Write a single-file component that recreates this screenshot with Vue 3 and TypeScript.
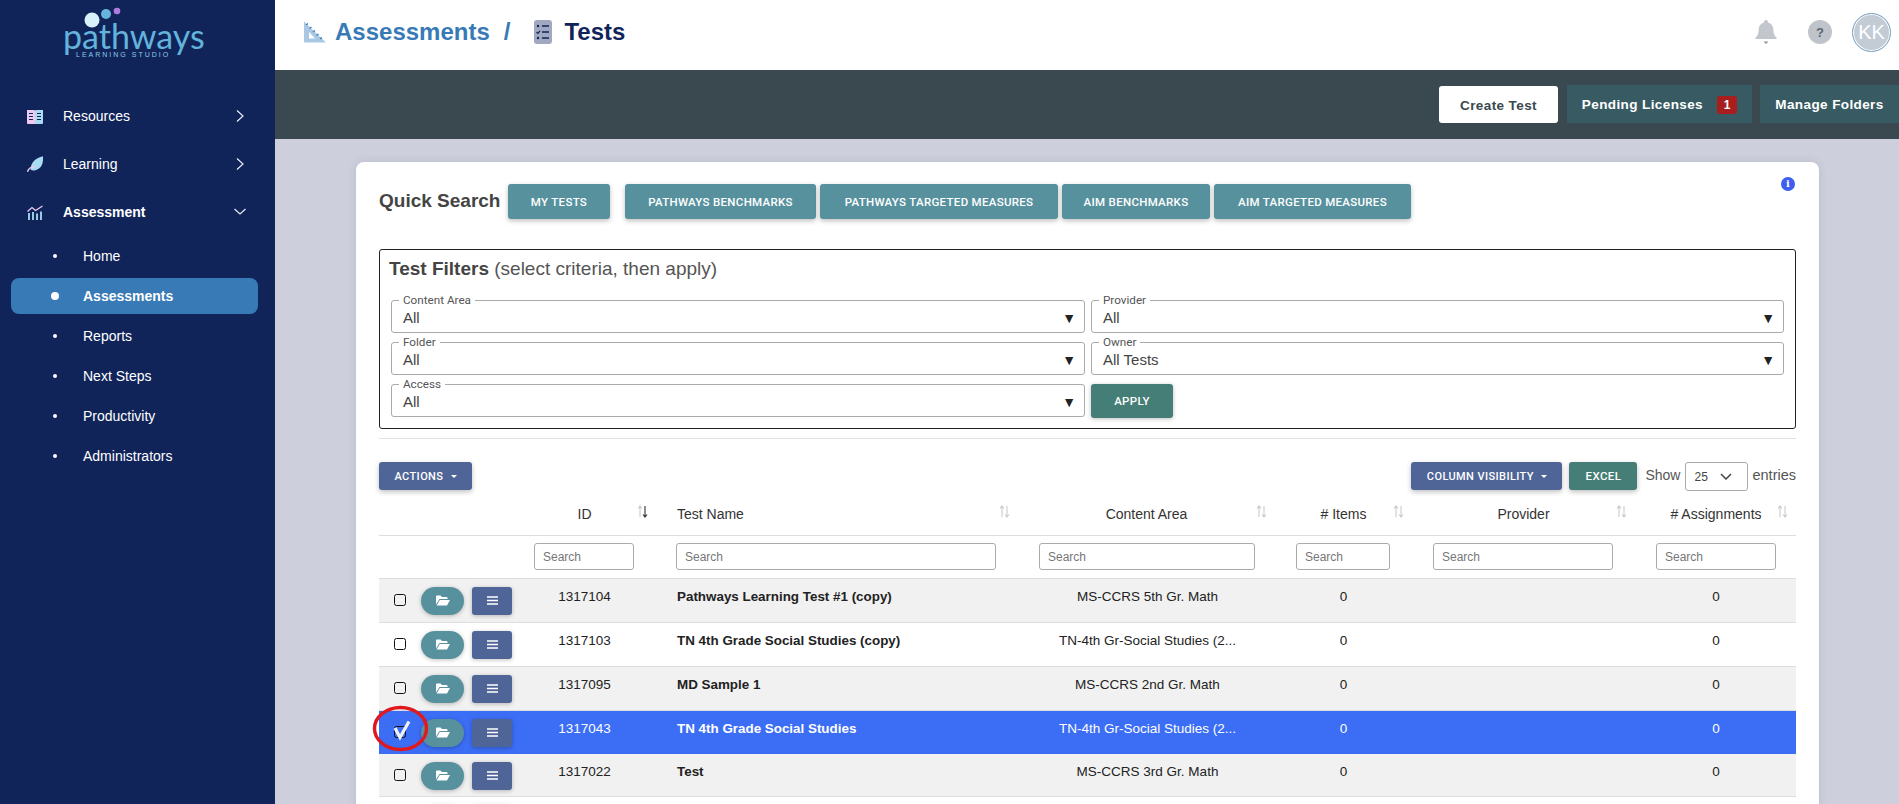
<script setup lang="ts">
interface Col { key: string; label: string; width: number; inputWidth: number; active?: boolean }
interface Row { id: string; name: string; area: string; items: string; assignments: string; selected?: boolean; short?: boolean }

const nav = ['Home', 'Assessments', 'Reports', 'Next Steps', 'Productivity', 'Administrators']
const quick = [
  { label: 'PATHWAYS BENCHMARKS', width: 191 },
  { label: 'PATHWAYS TARGETED MEASURES', width: 238 },
  { label: 'AIM BENCHMARKS', width: 148 },
  { label: 'AIM TARGETED MEASURES', width: 197 },
]
const leftFilters = [
  { label: 'Content Area', value: 'All' },
  { label: 'Folder', value: 'All' },
  { label: 'Access', value: 'All' },
]
const rightFilters = [
  { label: 'Provider', value: 'All' },
  { label: 'Owner', value: 'All Tests' },
]
const cols: Col[] = [
  { key: 'id', label: 'ID', width: 143, inputWidth: 100, active: true },
  { key: 'name', label: 'Test Name', width: 362, inputWidth: 320 },
  { key: 'area', label: 'Content Area', width: 257, inputWidth: 216 },
  { key: 'items', label: '# Items', width: 137, inputWidth: 94 },
  { key: 'provider', label: 'Provider', width: 223, inputWidth: 180 },
  { key: 'assign', label: '# Assignments', width: 152, inputWidth: 120 },
]
const rows: Row[] = [
  { id: '1317104', name: 'Pathways Learning Test #1 (copy)', area: 'MS-CCRS 5th Gr. Math', items: '0', assignments: '0' },
  { id: '1317103', name: 'TN 4th Grade Social Studies (copy)', area: 'TN-4th Gr-Social Studies (2...', items: '0', assignments: '0' },
  { id: '1317095', name: 'MD Sample 1', area: 'MS-CCRS 2nd Gr. Math', items: '0', assignments: '0' },
  { id: '1317043', name: 'TN 4th Grade Social Studies', area: 'TN-4th Gr-Social Studies (2...', items: '0', assignments: '0', selected: true, short: true },
  { id: '1317022', name: 'Test', area: 'MS-CCRS 3rd Gr. Math', items: '0', assignments: '0', short: true },
  { id: '', name: '', area: '', items: '', assignments: '' },
]
</script>

<template>
  <div class="app">
    <aside class="side">
      <div class="logo">
        <svg class="dots" width="60" height="30" viewBox="0 0 60 30">
          <circle cx="13" cy="21" r="7.5" fill="#d9f1f8" />
          <circle cx="27" cy="15" r="5" fill="#66b5dc" />
          <circle cx="38" cy="12" r="3.3" fill="#b07be0" />
        </svg>
        <div class="logo-word">pathways</div>
        <div class="logo-sub">LEARNING STUDIO</div>
      </div>

      <a class="item">
        <svg class="ico" width="16" height="15" viewBox="0 0 16 15">
          <path d="M0 1h7a1 1 0 0 1 1 1v13H1a1 1 0 0 1-1-1z" fill="#efc9ee" />
          <path d="M8 2a1 1 0 0 1 1-1h7v13a1 1 0 0 1-1 1H8z" fill="#a9dcf2" />
          <path d="M2 4.500h4M2 7.500h4M2 10.500h4M10 4.500h4M10 7.500h4M10 10.500h4" stroke="#10245a" stroke-width="1.100" />
        </svg>
        <span class="label">Resources</span>
        <svg class="chev" width="8" height="12" viewBox="0 0 8 12"><path d="M1 .500l6 5.500-6 5.500" fill="none" stroke="#e6ebf4" stroke-width="1.200" /></svg>
      </a>
      <a class="item">
        <svg class="ico" width="16" height="16" viewBox="0 0 16 16">
          <path d="M16 .2c.5 7-1.500 12.800-7.500 14-2 .4-3.800.2-5-.7C3.800 8 6.500 2.500 16 .2z" fill="#a9dcf2" />
          <path d="M0.500 15.800c1.200-3.800 3.800-5.300 8-4.800" fill="none" stroke="#efc9ee" stroke-width="1.400" />
        </svg>
        <span class="label">Learning</span>
        <svg class="chev" width="8" height="12" viewBox="0 0 8 12"><path d="M1 .500l6 5.500-6 5.500" fill="none" stroke="#e6ebf4" stroke-width="1.200" /></svg>
      </a>
      <a class="item open">
        <svg class="ico" width="16" height="15" viewBox="0 0 16 15">
          <path d="M0.500 6.500L5 2.500l3.500 3L15.500 1" fill="none" stroke="#efc9ee" stroke-width="1.300" />
          <path d="M2 8v7M6 7v8M10 8.500V15M14 6.500V15" stroke="#a9dcf2" stroke-width="1.800" />
        </svg>
        <span class="label">Assessment</span>
        <svg class="chev" width="12" height="8" viewBox="0 0 12 8"><path d="M.500 1l5.500 5 5.500-5" fill="none" stroke="#e6ebf4" stroke-width="1.200" /></svg>
      </a>
      <a v-for="n in nav" :key="n" class="sub" :class="{ current: n === 'Assessments' }">
        <span class="bullet"></span>
        <span>{{ n }}</span>
      </a>
    </aside>

    <main class="main">
      <header class="top">
        <svg class="crumb-ico" width="24" height="24" viewBox="0 0 24 24">
          <path d="M1 1.500L23 22.500H2a1 1 0 0 1-1-1z" fill="#aac8e4" />
          <path d="M6 12l6 6.500H6z" fill="#fff" />
          <path d="M3 5l2-1.500M6.500 8.500l2-1.500M10 12l2-1.500M13.500 15.500l2-1.500M17 19l2-1.500" stroke="#3a7ab8" stroke-width="1.200" />
        </svg>
        <span class="crumb link">Assessments</span>
        <span class="crumb link slash">/</span>
        <svg class="crumb-ico list" width="18" height="24" viewBox="0 0 18 24">
          <rect width="18" height="24" rx="3" fill="#a1a9c2" />
          <circle cx="4" cy="6" r="1.200" fill="#10245a" />
          <path d="M8 6h7M8 12h7M8 18h7" stroke="#10245a" stroke-width="1.600" />
          <path d="M2.500 12l1.400 1.400L6 10.800" fill="none" stroke="#10245a" stroke-width="1.200" />
          <circle cx="4" cy="18" r="1.200" fill="#10245a" />
        </svg>
        <span class="crumb dark">Tests</span>
        <div class="top-right">
          <svg class="bell" width="22" height="26" viewBox="0 0 22 26">
            <path d="M11 1a2 2 0 0 1 2 2v.6c3.600.9 5.400 3.800 5.400 7.400 0 4 1 5.800 3.100 7.500.5.500.2 1.500-.6 1.500H1.100c-.8 0-1.100-1-.6-1.500C2.600 16.800 3.600 15 3.600 11c0-3.600 1.800-6.500 5.400-7.400V3a2 2 0 0 1 2-2z" fill="#c2c7cd" />
            <path d="M8.500 22.500h5L11 25z" fill="#8f959c" />
          </svg>
          <span class="help">?</span>
          <span class="avatar">KK</span>
        </div>
      </header>

      <div class="bar">
        <button class="bar-btn white">Create Test</button>
        <button class="bar-btn teal pending">Pending Licenses <span class="badge">1</span></button>
        <button class="bar-btn teal folders">Manage Folders</button>
      </div>

      <div class="content">
        <section class="card">
          <span class="info">i</span>
          <div class="quick">
            <h2 class="quick-title">Quick Search</h2>
            <button class="qbtn mine">MY TESTS</button>
            <button v-for="q in quick" :key="q.label" class="qbtn" :style="{ width: q.width + 'px' }">{{ q.label }}</button>
          </div>

          <div class="filters">
            <h3 class="filter-title"><b>Test Filters</b> (select criteria, then apply)</h3>
            <div class="filter-grid">
              <div class="filter-col">
                <fieldset v-for="f in leftFilters" :key="f.label" class="fld">
                  <legend>{{ f.label }}</legend>
                  <span>{{ f.value }}</span><i class="tri">▼</i>
                </fieldset>
              </div>
              <div class="filter-col">
                <fieldset v-for="f in rightFilters" :key="f.label" class="fld">
                  <legend>{{ f.label }}</legend>
                  <span>{{ f.value }}</span><i class="tri">▼</i>
                </fieldset>
                <button class="apply">APPLY</button>
              </div>
            </div>
          </div>

          <div class="rule"></div>

          <div class="tools">
            <button class="tbtn navy actions">ACTIONS <i class="caret"></i></button>
            <div class="tools-right">
              <button class="tbtn navy colvis">COLUMN VISIBILITY <i class="caret"></i></button>
              <button class="tbtn green excel">EXCEL</button>
              <span class="show">Show</span>
              <span class="len">25
                <svg width="12" height="7" viewBox="0 0 12 7"><path d="M1 1l5 5 5-5" fill="none" stroke="#444" stroke-width="1.500" /></svg>
              </span>
              <span class="entries">entries</span>
            </div>
          </div>

          <table class="grid">
            <colgroup>
              <col class="c0" />
              <col v-for="c in cols" :key="c.key" :style="{ width: c.width + 'px' }" />
            </colgroup>
            <thead>
              <tr class="heads">
                <th></th>
                <th v-for="c in cols" :key="c.key" :class="'h-' + c.key">
                  {{ c.label }}
                  <svg class="sort" width="11" height="13" viewBox="0 0 11 13">
                    <path d="M3 12V1.500M1 3.500l2-2.500 2 2.500" fill="none" stroke="#c9ccd0" stroke-width="1.100" />
                    <path d="M8 1v10.500M6 9.500l2 2.500 2-2.500" fill="none" :stroke="c.active ? '#333' : '#c9ccd0'" stroke-width="1.100" />
                  </svg>
                </th>
              </tr>
              <tr class="searches">
                <th></th>
                <th v-for="c in cols" :key="c.key" :class="'s-' + c.key">
                  <input class="search" placeholder="Search" :style="{ width: c.inputWidth + 'px' }" />
                </th>
              </tr>
            </thead>
            <tbody>
              <tr v-for="(r, i) in rows" :key="i" :class="{ odd: i % 2 === 0, sel: r.selected, short: r.short }">
                <td class="ctl">
                  <div class="ctl-in">
                    <span class="box"></span>
                    <button class="pill">
                      <svg width="14" height="11" viewBox="0 0 14 11"><path d="M0 1.500A1 1 0 0 1 1 .5h3.500l1.500 1.500h4.500a1 1 0 0 1 1 1V4H3.500L0 9.500zM3.800 5H14l-3 5.500H.6z" fill="#fff" /></svg>
                    </button>
                    <button class="menu">
                      <svg width="11" height="9" viewBox="0 0 11 9"><path d="M0 1h11M0 4.500h11M0 8h11" stroke="#fff" stroke-width="1.400" /></svg>
                    </button>
                  </div>
                </td>
                <td class="mid c-id">{{ r.id }}</td>
                <td class="nm">{{ r.name }}</td>
                <td class="mid c-area">{{ r.area }}</td>
                <td class="mid c-items">{{ r.items }}</td>
                <td></td>
                <td class="mid c-assign">{{ r.assignments }}</td>
              </tr>
            </tbody>
          </table>

          <svg class="mark" width="62" height="52" viewBox="0 0 62 52">
            <path d="M25 25l5 9.500 9-16" fill="none" stroke="#eef3ff" stroke-width="3.200" />
            <ellipse cx="30.500" cy="25.500" rx="26" ry="21" fill="none" stroke="#e0191f" stroke-width="3.400" />
          </svg>
        </section>
      </div>
    </main>
  </div>
</template>

<style>
html, body { margin: 0; height: 100%; overflow: hidden; }
</style>

<style scoped>
.app { display: flex; height: 804px; overflow: hidden; font-family: "Liberation Sans", Arial, sans-serif; color: #222; }
button { font-family: inherit; border: 0; cursor: pointer; padding: 0; }

.side { flex: 0 0 275px; box-sizing: border-box; background: #10245a; color: #fff; font-size: 14px; }
.logo { height: 92px; box-sizing: border-box; position: relative; color: #63b3da; }
.dots { position: absolute; left: 79px; top: -1px; }
.logo-word { padding: 21px 0 0 63px; font-family: "Lato", sans-serif; font-weight: 400; font-size: 34px; line-height: 30px; }
.logo-sub { font-size: 7px; letter-spacing: 2px; line-height: 8px; padding-left: 76px; color: #8fcbe6; white-space: nowrap; }

.item { display: flex; align-items: center; height: 48px; padding-left: 27px; }
.item .label { margin-left: 20px; flex: 1; }
.item.open { font-weight: 700; }
.ico { flex: none; }
.chev { margin-right: 31px; }
.item.open .chev { margin-right: 29px; }
.sub { display: flex; align-items: center; height: 36px; margin: 2px 17px 4px 11px; padding-left: 72px; position: relative; border-radius: 8px; font-size: 14px; }
.bullet { position: absolute; left: 42px; top: 16px; width: 4px; height: 4px; background: #fff; border-radius: 50%; }
.sub.current { background: #387ab6; font-weight: 700; }
.sub.current .bullet { width: 8px; height: 8px; left: 40px; top: 14px; }

.main { flex: 1; min-width: 0; display: flex; flex-direction: column; background: #cdcfdc; }
.top { flex: 0 0 70px; box-sizing: border-box; background: #fff; display: flex; align-items: center; padding: 0 0 6px 28px; }
.crumb { font-size: 24px; font-weight: 700; }
.crumb-ico { margin-right: 8px; flex: none; }
.crumb-ico.list { margin: 0 12px 0 0; }
.link { color: #387ab6; }
.slash { margin: 0 24px 0 14px; }
.dark { color: #10245a; }
.top-right { margin-left: auto; display: flex; align-items: center; padding-right: 8px; }
.bell { margin-right: 31px; }
.help { width: 24px; height: 24px; border-radius: 50%; background: #bfc4ca; color: #5d6670; font-size: 13px; font-weight: 700; display: flex; align-items: center; justify-content: center; margin-right: 20px; }
.avatar { box-sizing: border-box; width: 39px; height: 39px; border-radius: 50%; background: #c3cbd5; color: #fff; font-size: 20px; display: flex; align-items: center; justify-content: center; border: 1px solid #7aa3c4; box-shadow: inset 0 0 0 1px #fff; }

.bar { flex: 0 0 69px; box-sizing: border-box; background: #3a4850; display: flex; align-items: flex-start; padding: 15px 0 0 0; justify-content: flex-end; }
.bar-btn { height: 38px; font-size: 13.500px; font-weight: 700; letter-spacing: .4px; white-space: nowrap; padding-top: 1px; }
.bar-btn.white { width: 119px; height: 37px; margin: 1px 9px 0 0; background: #fff; color: #3a4850; border-radius: 3px; }
.bar-btn.teal { background: #385b63; color: #fff; }
.pending { width: 185px; margin-right: 8px; }
.folders { width: 139px; }
.badge { display: inline-block; margin-left: 10px; width: 20px; height: 18px; line-height: 18px; background: #a81e1e; border-radius: 3px; font-size: 12px; text-align: center; letter-spacing: 0; vertical-align: 0; }

.content { flex: 1; min-height: 0; padding: 23px 80px 0 81px; }
.card { position: relative; background: #fff; border-radius: 8px 8px 0 0; padding: 22px 23px 0 21px; height: 800px; box-sizing: border-box; box-shadow: 0 0 8px rgba(60, 60, 90, .12); }
.info { position: absolute; left: 1425px; top: 15px; width: 14px; height: 14px; border-radius: 50%; background: #3d5ef0; color: #fff; font: 700 10px/14px "DejaVu Serif", serif; text-align: center; }

.quick { display: flex; align-items: flex-start; height: 35px; margin-left: 2px; }
.quick-title { width: 121px; flex: none; margin: 6px 8px 0 0; font-size: 19px; line-height: 22px; font-weight: 700; color: #444; white-space: nowrap; }
.qbtn { flex: none; height: 35px; margin-right: 4px; background: #57919e; color: #fff; border-radius: 3px; font-family: "Roboto", sans-serif; font-size: 11.500px; font-weight: 500; letter-spacing: .3px; box-shadow: 0 2px 5px rgba(0, 0, 0, .25); white-space: nowrap; }
.qbtn.mine { margin-right: 15px; width: 102px; }

.filters { margin-top: 30px; margin-left: 2px; height: 180px; box-sizing: border-box; border: 1px solid #222; border-radius: 3px; padding: 8px 11px 0 11px; }
.filter-title { margin: 0 0 0 -2px; font-size: 19px; line-height: 22px; font-weight: 400; color: #555; }
.filter-title b { color: #444; }
.filter-grid { display: grid; grid-template-columns: 694px 693px; column-gap: 6px; margin-top: 14px; }
.filter-col { display: flex; flex-direction: column; gap: 3px; }
.fld { position: relative; margin: 0; box-sizing: border-box; height: 39px; min-width: 0; border: 1px solid #aaa; border-radius: 3px; padding: 0 0 0 11px; font-size: 15px; line-height: 18px; color: #444; }
.fld legend { padding: 0 4px; margin-left: -4px; font-family: "Roboto", sans-serif; font-size: 11.700px; line-height: 12px; color: #555; }
.fld span { display: block; margin-top: 3px; }
.tri { position: absolute; right: 8px; top: 3px; font-style: normal; font-size: 14px; color: #222; }
.apply { width: 82px; height: 34px; margin-top: 6px; background: #457e76; color: #fff; border-radius: 3px; font-family: "Roboto", sans-serif; font-size: 11.500px; font-weight: 500; letter-spacing: .3px; box-shadow: 0 1px 4px rgba(0, 0, 0, .25); }

.rule { height: 1px; background: #e2e2e2; margin: 9px 0 0 2px; }

.tools { display: flex; justify-content: space-between; align-items: flex-start; margin: 23px 0 0 2px; height: 29px; }
.tools-right { display: flex; align-items: flex-start; font-size: 14px; color: #555; }
.tbtn { height: 28px; color: #fff; border-radius: 3px; font-family: "Roboto", sans-serif; font-size: 11px; font-weight: 500; letter-spacing: .4px; box-shadow: 0 2px 5px rgba(0, 0, 0, .25); white-space: nowrap; }
.navy { background: #4f6597; }
.green { background: #457e76; }
.actions { width: 93px; }
.colvis { width: 151px; margin-right: 7px; }
.excel { width: 68px; font-size: 11.500px; }
.caret { display: inline-block; width: 0; height: 0; margin-left: 4px; vertical-align: 2px; border: 3px solid transparent; border-top-color: #fff; border-bottom: 0; }
.show { margin: 5px 5px 0 8px; line-height: 16px; }
.len { box-sizing: border-box; width: 63px; height: 29px; border: 1px solid #aaa; border-radius: 3px; padding: 0 15px 0 8px; font-size: 12px; color: #444; display: flex; align-items: center; justify-content: space-between; }
.entries { margin: 5px 0 0 4px; line-height: 16px; font-size: 14.500px; }

.grid { table-layout: fixed; width: 1417px; margin-left: 2px; border-collapse: collapse; font-size: 13.500px; }
.c0 { width: 143px; }
.heads th { position: relative; height: 44px; padding: 2px 18px 0 0; box-sizing: border-box; border-bottom: 1px solid #ddd; font-weight: 400; font-size: 14px; color: #333; text-align: center; }
.heads .h-name { text-align: left; padding-left: 12px; }
.heads .h-assign { padding-right: 8px; }
.sort { position: absolute; right: 17px; top: 14px; }
.h-assign .sort { right: 8px; }
.searches th { height: 43px; padding: 0; box-sizing: border-box; border-bottom: 1px solid #ddd; font-weight: 400; text-align: left; }
.s-id { padding-left: 12px !important; }
.s-name { padding-left: 11px !important; }
.s-area, .s-items, .s-provider, .s-assign { padding-left: 12px !important; }
.search { display: block; box-sizing: border-box; height: 27px; padding: 0 8px; border: 1px solid #aaa; border-radius: 3px; font-family: inherit; font-size: 12px; outline: none; background: #fff; }
.search::placeholder { color: #777; }

tbody tr { height: 44px; }
tbody tr.short { height: 43px; }
tbody td { padding: 10px 0 0; box-sizing: border-box; vertical-align: top; line-height: 16px; border-bottom: 1px solid #ddd; color: #222; overflow: hidden; white-space: nowrap; }
tr.odd td { background: #f1f1f1; }
tr.sel td { background: #3b6ef5; color: #fff; border-bottom-color: #3b6ef5; }
td.mid { text-align: center; padding-right: 18px; }
td.c-area { padding-right: 16px; }
td.c-assign { padding-right: 8px; }
td.nm { font-weight: 700; padding-left: 12px; font-size: 13.400px; }
td.ctl { padding: 8px 0 0 15px; }
.ctl-in { display: flex; align-items: center; }
.box { box-sizing: border-box; flex: none; width: 12px; height: 12px; border: 1px solid #111; border-radius: 2.500px; background: transparent; margin: -2px 15px 0 0; }
.pill { width: 43px; height: 28px; background: #57919e; border-radius: 14px; margin-right: 8px; display: flex; align-items: center; justify-content: center; box-shadow: 0 1px 4px rgba(0, 0, 0, .25); }
.menu { width: 40px; height: 28px; background: #4f6597; border-radius: 3px; display: flex; align-items: center; justify-content: center; box-shadow: 0 1px 4px rgba(0, 0, 0, .25); }
.mark { position: absolute; left: 14px; top: 541px; }
</style>
